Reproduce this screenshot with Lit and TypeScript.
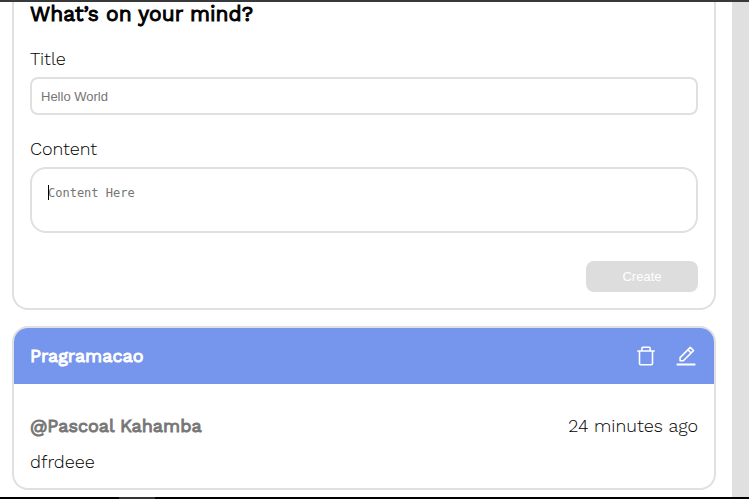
import { LitElement, html, css } from "lit";
import { customElement, property, state } from "lit/decorators.js";

@customElement("post-form")
class PostForm extends LitElement {
  @state() private heading = "";
  @state() private content = "";

  static styles = css`
    :host { display: block; }
    form {
      display: flex;
      flex-direction: column;
      border: 2px solid #e0e0e0;
      border-top: 0;
      border-radius: 0 0 16px 16px;
      padding: 0 16px 16px;
      background: #fff;
    }
    h1 { margin: 0 0 24px; font-size: 21px; line-height: 23px; font-weight: 400; -webkit-text-stroke: 1px; }
    label { font-size: 18px; line-height: 20px; margin-bottom: 8px; }
    input, textarea {
      box-sizing: border-box;
      display: block;
      width: 100%;
      margin: 0;
      border: 2px solid #e0e0e0;
      background: #fff;
      color: #000;
      outline: none;
      resize: none;
    }
    input {
      height: 38px;
      margin-bottom: 24px;
      padding: 0 9px;
      border-radius: 8px;
      font: 13px "Liberation Sans", Arial, sans-serif;
    }
    textarea {
      height: 66px;
      padding: 16px;
      border-radius: 16px;
      font: 12px/16px "DejaVu Sans Mono", monospace;
      overflow: hidden;
    }
    ::placeholder { color: #757575; opacity: 1; }
    .field { position: relative; margin-bottom: 28px; }
    .caret {
      position: absolute;
      left: 18px;
      top: 18px;
      width: 1px;
      height: 15px;
      background: #000;
    }
    button {
      align-self: flex-end;
      width: 112px;
      height: 31px;
      border: 0;
      border-radius: 8px;
      background: #ddd;
      color: #fff;
      font: 13px "Liberation Sans", Arial, sans-serif;
    }
  `;

  render() {
    return html`
      <form @submit=${(e: Event) => e.preventDefault()}>
        <h1>What’s on your mind?</h1>
        <label for="title">Title</label>
        <input id="title" type="text" placeholder="Hello World" .value=${this.heading}
          @input=${(e: Event) => (this.heading = (e.target as HTMLInputElement).value)} />
        <label for="content">Content</label>
        <div class="field">
          <textarea id="content" placeholder="Content Here" .value=${this.content}
            @input=${(e: Event) => (this.content = (e.target as HTMLTextAreaElement).value)}></textarea>
          ${this.content ? null : html`<span class="caret"></span>`}
        </div>
        <button type="submit" ?disabled=${!this.heading || !this.content}>Create</button>
      </form>
    `;
  }
}

@customElement("post-card")
class PostCard extends LitElement {
  @property() heading = "";
  @property() author = "";
  @property() time = "";
  @property() text = "";

  static styles = css`
    :host { display: block; }
    article {
      border: 2px solid #e0e0e0;
      border-radius: 16px;
      overflow: hidden;
      background: #fff;
    }
    header {
      display: flex;
      align-items: center;
      justify-content: space-between;
      height: 56px;
      padding: 0 16px;
      background: #7695ec;
      color: #fff;
    }
    h2 { margin: 0; font-size: 18px; line-height: 20px; font-weight: 400; -webkit-text-stroke: 1px; }
    .actions { display: flex; gap: 16px; }
    button { display: block; padding: 0; border: 0; background: none; color: inherit; }
    svg { display: block; width: 24px; height: 24px; fill: currentColor; }
    .body { padding: 32px 16px 16px; font-size: 18px; line-height: 20px; }
    .meta { display: flex; justify-content: space-between; margin-bottom: 16px; }
    .author { color: #777; font-weight: 400; -webkit-text-stroke: 1px; }
    p { margin: 0; }
  `;

  render() {
    return html`
      <article>
        <header>
          <h2>${this.heading}</h2>
          <div class="actions">
            <button type="button" aria-label="Delete">
              <svg viewBox="0 0 24 24">
                <path fill="none" stroke="currentColor" stroke-width="1.6" d="M3.2 7h17.6M5.5 7v12.6q0 1.2 1.2 1.2h10.6q1.2 0 1.2-1.2V7M7.9 7V4q0-.8.8-.8h6.6q.8 0 .8.8v3" />
              </svg>
            </button>
            <button type="button" aria-label="Edit">
              <svg viewBox="0 0 24 24">
                <path fill="none" stroke="currentColor" stroke-width="1.6" stroke-linejoin="round" d="M6.1 16.8v-3.2L16.3 3.4l3.2 3.2L9.3 16.8zM13.9 5.8l3.2 3.2" />
                <path d="M2.6 19.6h18.8v1.9H2.6z" />
              </svg>
            </button>
          </div>
        </header>
        <div class="body">
          <div class="meta"><span class="author">@${this.author}</span><time>${this.time}</time></div>
          <p>${this.text}</p>
        </div>
      </article>
    `;
  }
}

@customElement("app-root")
class AppRoot extends LitElement {
  static styles = css`
    :host {
      box-sizing: border-box;
      display: flex;
      flex-direction: column;
      min-height: 100vh;
      border-top: 2px solid #393939;
      background: #e0e0e0;
      color: #000;
      font-family: "Work Sans", Inter, sans-serif;
      font-weight: 300;
    }
    main {
      flex: 1;
      display: flex;
      flex-direction: column;
      gap: 16px;
      margin-right: 17px;
      padding: 0 16px 7px 12px;
      background: #fff;
    }
    footer { height: 2px; padding-left: 119px; background: #000; }
    .tab { width: 36px; height: 2px; background: #333; }
  `;

  render() {
    return html`
      <main>
        <post-form></post-form>
        <post-card heading="Pragramacao" author="Pascoal Kahamba" time="24 minutes ago" text="dfrdeee"></post-card>
      </main>
      <footer><div class="tab"></div></footer>
    `;
  }
}
